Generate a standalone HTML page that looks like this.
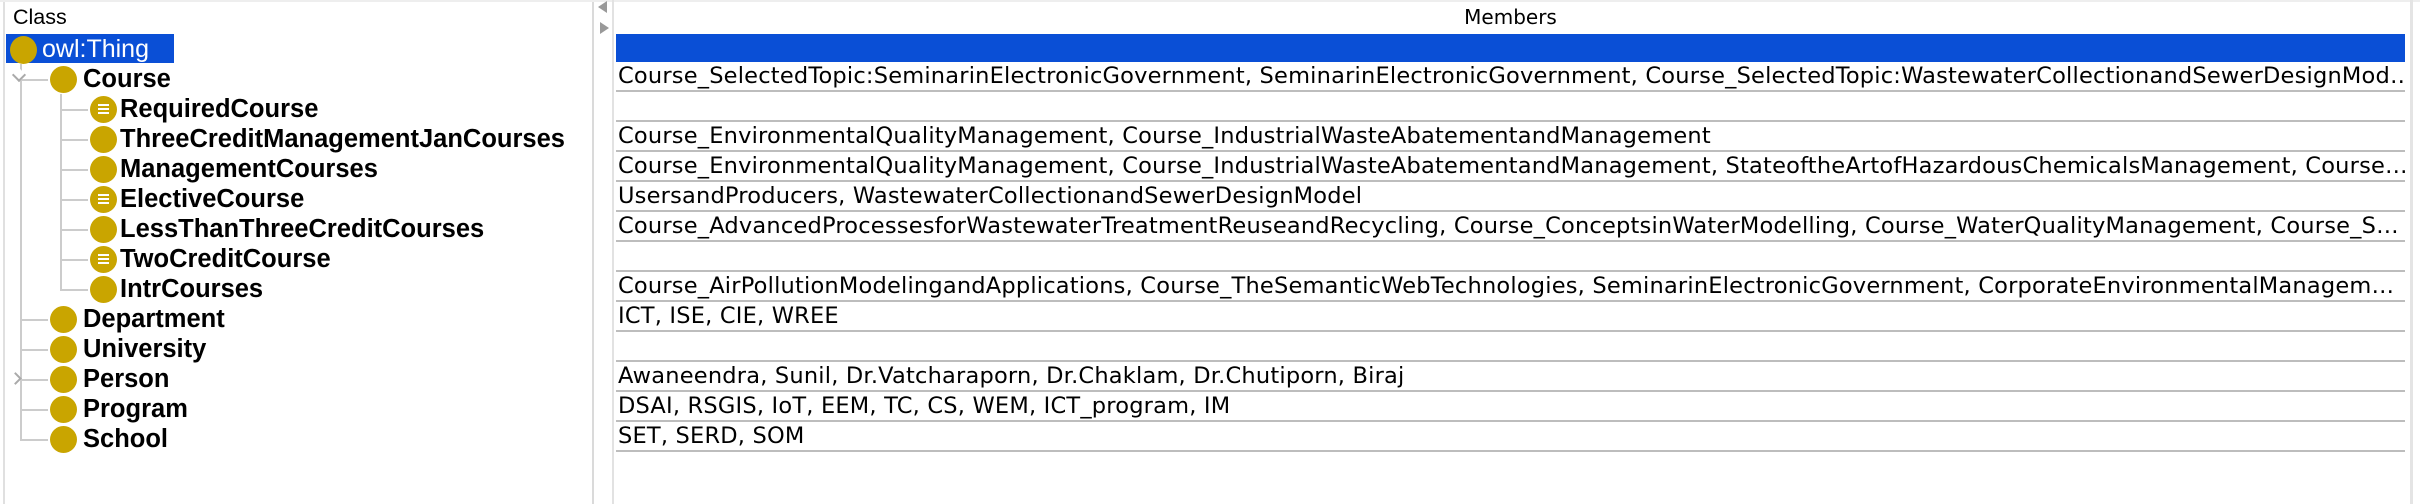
<!DOCTYPE html>
<html><head><meta charset="utf-8"><style>
*{margin:0;padding:0;box-sizing:border-box}
body{width:2420px;height:504px;background:#fff;position:relative;overflow:hidden;font-family:"Liberation Sans",sans-serif;color:#000}
.abs{position:absolute}
.c{position:absolute;width:27px;height:27px;border-radius:50%;background:#c9a500}
.eq::after{content:"";position:absolute;left:8px;top:8px;width:11px;height:2px;background:#fff;box-shadow:0 4px 0 #fff,0 8px 0 #fff}
.t{position:absolute;font-weight:bold;font-size:25.5px;line-height:30px;white-space:nowrap}
.hl{position:absolute;background:#ccc}
.row{position:absolute;left:616px;width:1789px;height:30px;border-bottom:2px solid #bdbdbd;font-family:"DejaVu Sans","Liberation Sans",sans-serif;font-size:22.5px;letter-spacing:0.2px;line-height:28px;padding-left:2px;white-space:nowrap;overflow:hidden}
</style></head><body>
<div class="abs" style="left:3px;top:0;width:2px;height:504px;background:#e0e0e0"></div>
<div class="abs" style="left:592px;top:0;width:2px;height:504px;background:#dadada"></div>
<div class="abs" style="left:0;top:0;width:2420px;height:2px;background:#eee"></div>
<div class="abs" style="left:13px;top:0;font-size:21.5px;line-height:34px">Class</div>
<div class="abs" style="left:598px;top:1px;width:0;height:0;border-top:6px solid transparent;border-bottom:6px solid transparent;border-right:9px solid #999"></div>
<div class="abs" style="left:600px;top:22px;width:0;height:0;border-top:6px solid transparent;border-bottom:6px solid transparent;border-left:9px solid #999"></div>
<div class="abs" style="left:612px;top:0;width:2px;height:504px;background:#e2e2e2"></div>
<div class="abs" style="left:2410px;top:0;width:3px;height:504px;background:#e4e4e4"></div>

<div class="hl" style="left:20px;top:64px;width:2px;height:376px"></div>
<div class="hl" style="left:20px;top:79px;width:28px;height:2px"></div>
<div class="hl" style="left:20px;top:319px;width:28px;height:2px"></div>
<div class="hl" style="left:20px;top:349px;width:28px;height:2px"></div>
<div class="hl" style="left:20px;top:379px;width:28px;height:2px"></div>
<div class="hl" style="left:20px;top:409px;width:28px;height:2px"></div>
<div class="hl" style="left:20px;top:439px;width:28px;height:2px"></div>
<div class="hl" style="left:60px;top:94px;width:2px;height:196px"></div>
<div class="hl" style="left:60px;top:109px;width:28px;height:2px"></div>
<div class="hl" style="left:60px;top:139px;width:28px;height:2px"></div>
<div class="hl" style="left:60px;top:169px;width:28px;height:2px"></div>
<div class="hl" style="left:60px;top:199px;width:28px;height:2px"></div>
<div class="hl" style="left:60px;top:229px;width:28px;height:2px"></div>
<div class="hl" style="left:60px;top:259px;width:28px;height:2px"></div>
<div class="hl" style="left:60px;top:289px;width:28px;height:2px"></div>
<div class="abs" style="left:14px;top:70px;width:10px;height:10px;border-right:2px solid #aaa;border-bottom:2px solid #aaa;transform:rotate(45deg);background:#fff"></div>
<div class="abs" style="left:11px;top:374px;width:9px;height:9px;border-right:2px solid #aaa;border-top:2px solid #aaa;transform:rotate(45deg);background:#fff"></div>

<div class="abs" style="left:6px;top:34px;width:168px;height:29px;background:#0a4fd6"></div>
<div class="c" style="left:10px;top:36px;height:28px"></div>
<div class="abs" style="left:42px;top:34px;font-size:25px;line-height:30px;color:#fff">owl:Thing</div>

<div class="c" style="left:50px;top:66px"></div><div class="t" style="left:83px;top:64px">Course</div>
<div class="c eq" style="left:90px;top:96px"></div><div class="t" style="left:120px;top:94px">RequiredCourse</div>
<div class="c" style="left:90px;top:126px"></div><div class="t" style="left:120px;top:124px">ThreeCreditManagementJanCourses</div>
<div class="c" style="left:90px;top:156px"></div><div class="t" style="left:120px;top:154px">ManagementCourses</div>
<div class="c eq" style="left:90px;top:186px"></div><div class="t" style="left:120px;top:184px">ElectiveCourse</div>
<div class="c" style="left:90px;top:216px"></div><div class="t" style="left:120px;top:214px">LessThanThreeCreditCourses</div>
<div class="c eq" style="left:90px;top:246px"></div><div class="t" style="left:120px;top:244px">TwoCreditCourse</div>
<div class="c" style="left:90px;top:276px"></div><div class="t" style="left:120px;top:274px">IntrCourses</div>
<div class="c" style="left:50px;top:306px"></div><div class="t" style="left:83px;top:304px">Department</div>
<div class="c" style="left:50px;top:336px"></div><div class="t" style="left:83px;top:334px">University</div>
<div class="c" style="left:50px;top:366px"></div><div class="t" style="left:83px;top:364px">Person</div>
<div class="c" style="left:50px;top:396px"></div><div class="t" style="left:83px;top:394px">Program</div>
<div class="c" style="left:50px;top:426px"></div><div class="t" style="left:83px;top:424px">School</div>

<div class="abs" style="left:616px;top:0;width:1789px;text-align:center;font-family:'DejaVu Sans',sans-serif;font-size:20px;line-height:34px">Members</div>
<div class="abs" style="left:616px;top:34px;width:1789px;height:28px;background:#0a4fd6"></div>
<div class="row" style="top:62px">Course_SelectedTopic:SeminarinElectronicGovernment, SeminarinElectronicGovernment, Course_SelectedTopic:WastewaterCollectionandSewerDesignMod…</div>
<div class="row" style="top:92px"></div>
<div class="row" style="top:122px">Course_EnvironmentalQualityManagement, Course_IndustrialWasteAbatementandManagement</div>
<div class="row" style="top:152px">Course_EnvironmentalQualityManagement, Course_IndustrialWasteAbatementandManagement, StateoftheArtofHazardousChemicalsManagement, Course…</div>
<div class="row" style="top:182px">UsersandProducers, WastewaterCollectionandSewerDesignModel</div>
<div class="row" style="top:212px">Course_AdvancedProcessesforWastewaterTreatmentReuseandRecycling, Course_ConceptsinWaterModelling, Course_WaterQualityManagement, Course_S…</div>
<div class="row" style="top:242px"></div>
<div class="row" style="top:272px">Course_AirPollutionModelingandApplications, Course_TheSemanticWebTechnologies, SeminarinElectronicGovernment, CorporateEnvironmentalManagem…</div>
<div class="row" style="top:302px">ICT, ISE, CIE, WREE</div>
<div class="row" style="top:332px"></div>
<div class="row" style="top:362px">Awaneendra, Sunil, Dr.Vatcharaporn, Dr.Chaklam, Dr.Chutiporn, Biraj</div>
<div class="row" style="top:392px">DSAI, RSGIS, IoT, EEM, TC, CS, WEM, ICT_program, IM</div>
<div class="row" style="top:422px">SET, SERD, SOM</div>
</body></html>
